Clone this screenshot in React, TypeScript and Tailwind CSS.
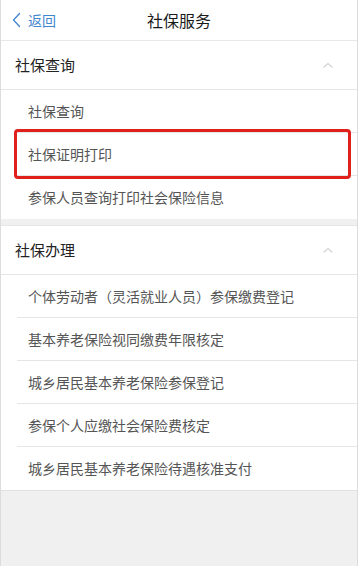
import React from 'react';

const queryItems = ['社保查询', '社保证明打印', '参保人员查询打印社会保险信息'];
const handleItems = [
  '个体劳动者（灵活就业人员）参保缴费登记',
  '基本养老保险视同缴费年限核定',
  '城乡居民基本养老保险参保登记',
  '参保个人应缴社会保险费核定',
  '城乡居民基本养老保险待遇核准支付',
];

const ChevronUp = () => (
  <svg width="12" height="8" viewBox="0 0 12 8" fill="none">
    <path d="M2 6l4-3.5L10 6" stroke="#d4d4d4" strokeWidth="1.3" strokeLinecap="round" />
  </svg>
);

const Section: React.FC<{ title: string; items: string[]; highlight?: number }> = ({ title, items, highlight }) => (
  <div className="bg-white">
    <div className="h-[49px] flex items-center justify-between pl-[14px] pr-[23px] border-b border-[#e6e6e6]">
      <span className="text-[15px] text-[#222]">{title}</span>
      <ChevronUp />
    </div>
    <div className="pl-[16px]">
      {items.map((item, i) => (
        <div
          key={item}
          className={
            i < items.length - 1
              ? 'relative h-[43px] flex items-center pl-[11px] border-b border-[#e6e6e6]'
              : 'relative h-[43px] flex items-center pl-[11px]'
          }
        >
          <span className="text-[14px] text-[#555]">{item}</span>
          {highlight === i && (
            <div className="absolute left-[-3px] right-[6px] top-[-4px] bottom-[-4px] border-[3px] border-[#e0201b] rounded-[4px]" />
          )}
        </div>
      ))}
    </div>
  </div>
);

export default function App() {
  return (
    <div
      className="w-[358px] h-[566px] bg-[#f0f0f0] border-x border-[#dcdcdc] overflow-hidden"
      style={{ fontFamily: '"Noto Sans CJK SC", "Noto Sans", sans-serif' }}
    >
      <div className="relative h-[41px] bg-white flex items-center justify-center border-b border-[#e8e8e8]">
        <div className="absolute left-[11px] top-0 bottom-0 flex items-center gap-[7px] text-[#3f86cf]">
          <svg width="9" height="16" viewBox="0 0 9 16" fill="none">
            <path d="M7.5 1.5L1.5 8l6 6.5" stroke="#3f86cf" strokeWidth="1.3" strokeLinecap="round" />
          </svg>
          <span className="text-[14px]">返回</span>
        </div>
        <span className="text-[16px] text-[#1a1a1a]">社保服务</span>
      </div>
      <Section title="社保查询" items={queryItems} highlight={1} />
      <div className="h-[7px] border-b border-[#e6e6e6]" />
      <Section title="社保办理" items={handleItems} />
      <div className="border-t border-[#e0e0e0]" />
    </div>
  );
}
